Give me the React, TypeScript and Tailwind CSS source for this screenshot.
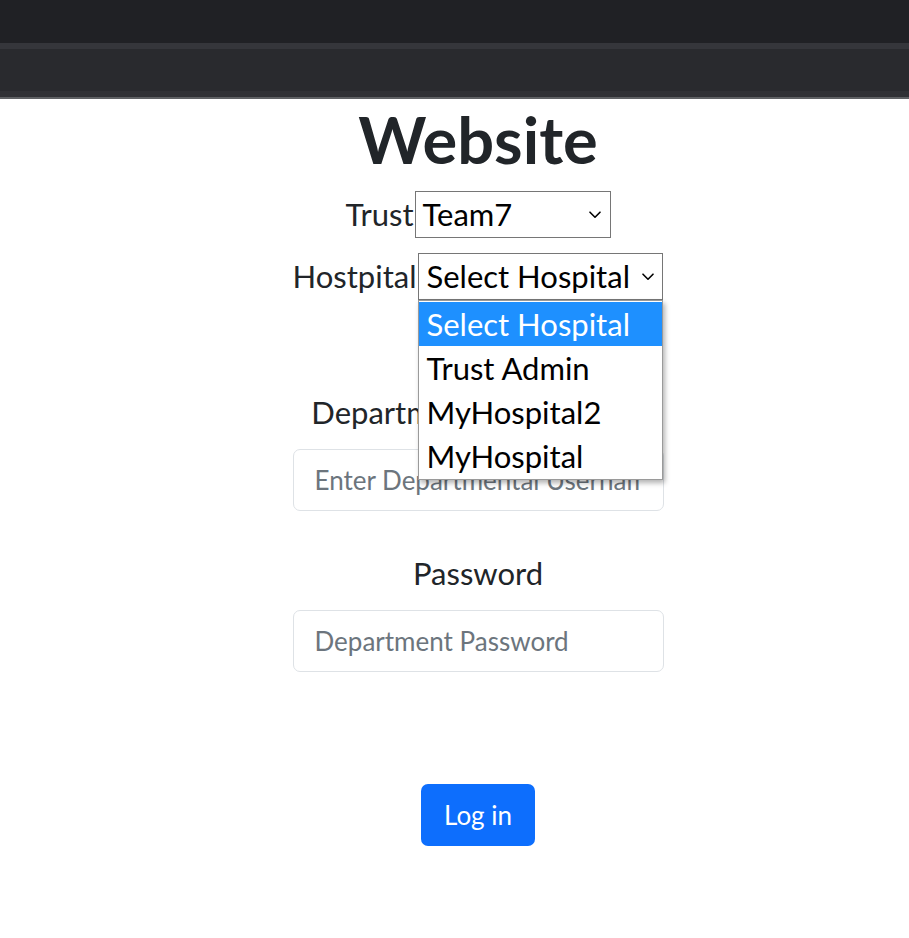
import { useState } from "react";

const hospitals = ["Select Hospital", "Trust Admin", "MyHospital2", "MyHospital"];

function Chevron() {
  return (
    <svg width="12" height="8" viewBox="0 0 12 8" fill="none" className="shrink-0">
      <path d="M1 1.2L6 6.2L11 1.2" stroke="#000" strokeWidth="1.6" strokeLinecap="round" strokeLinejoin="round" />
    </svg>
  );
}

export default function App() {
  const [trust] = useState("Team7");
  const [hospital] = useState(hospitals[0]);

  return (
    <div className="min-h-screen bg-white font-[Lato,sans-serif] text-[#212529]">
      {/* browser chrome */}
      <div className="h-[43px] bg-[#202125]" />
      <div className="h-[6px] bg-[#35363b]" />
      <div className="h-[42px] bg-[#292a2e]" />
      <div className="h-[6px] bg-[#303135]" />
      <div className="h-[2px] bg-[#5f6164]" />

      <div className="flex flex-col items-center pl-[47px]">
        <h1 className="mt-[1px] text-[65px] font-bold leading-[78px]">Website</h1>

        {/* Trust */}
        <div className="mt-[13px] flex items-center gap-[1px]">
          <label className="text-[31px] leading-[47px]">Trust</label>
          <div className="flex h-[47px] w-[196px] items-center justify-between border border-[#767676] bg-white pl-[7px] pr-[9px] text-[31px] text-black">
            <span>{trust}</span>
            <Chevron />
          </div>
        </div>

        {/* Hospital */}
        <div className="mt-[15px] flex items-center gap-[2px]">
          <label className="text-[31px] leading-[47px]">Hostpital</label>
          <div className="relative">
            <div className="flex h-[47px] w-[245px] items-center justify-between border border-[#767676] bg-white pl-[7px] pr-[8px] text-[31px] text-black">
              <span>{hospital}</span>
              <Chevron />
            </div>
            {/* open dropdown list */}
            <ul className="absolute left-0 top-full z-10 w-[245px] border border-[#9a9a9a] bg-white py-[1px] shadow-[2px_3px_5px_rgba(0,0,0,0.3)]">
              {hospitals.map((h, i) => (
                <li
                  key={h}
                  className={`h-[44px] pl-[7px] text-[31px] leading-[44px] ${
                    i === 0 ? "bg-[#1e90ff] text-white" : "text-black"
                  }`}
                >
                  {h}
                </li>
              ))}
            </ul>
          </div>
        </div>

        {/* Department username */}
        <label className="mt-[88px] text-[31px] leading-[49px]">Departmental Username</label>
        <input
          type="text"
          placeholder="Enter Departmental Username"
          className="mt-[12px] h-[62px] w-[371px] rounded-[7px] border border-[#dee2e6] px-[21px] text-[26px] outline-none placeholder:text-[#6c757d]"
        />

        {/* Password */}
        <label className="mt-[38px] text-[31px] leading-[49px]">Password</label>
        <input
          type="password"
          placeholder="Department Password"
          className="mt-[12px] h-[62px] w-[371px] rounded-[7px] border border-[#dee2e6] px-[21px] text-[26px] outline-none placeholder:text-[#6c757d]"
        />

        <button className="mt-[112px] h-[62px] w-[114px] rounded-[7px] bg-[#0d6efd] text-[26px] text-white">
          Log in
        </button>
      </div>
    </div>
  );
}
